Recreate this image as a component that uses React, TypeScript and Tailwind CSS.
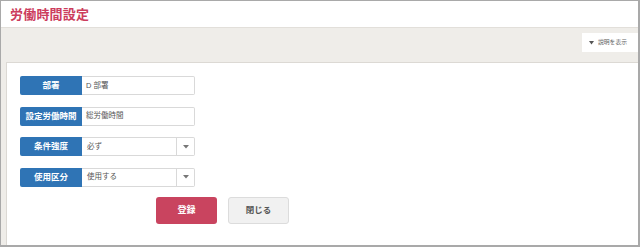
const jp = "font-['Liberation_Sans','Noto_Sans_CJK_JP',sans-serif]"

function Label({ text }: { text: string }) {
  return (
    <div className="w-[62px] h-full bg-[#2f74b5] rounded-l-[2px] flex items-center justify-center text-white text-[8.5px] font-bold shrink-0 whitespace-nowrap">
      {text}
    </div>
  )
}

function TextRow({ label, value }: { label: string; value: string }) {
  return (
    <div className="flex h-[19px]">
      <Label text={label} />
      <div className="w-[113px] h-full border border-l-0 border-[#d9d9d9] rounded-r-[2px] bg-white flex items-center pl-[4px] text-[7.5px] text-[#555]">
        {value}
      </div>
    </div>
  )
}

function SelectRow({ label, value }: { label: string; value: string }) {
  return (
    <div className="flex h-[19px]">
      <Label text={label} />
      <div className="w-[113px] h-full border border-l-0 border-[#d9d9d9] rounded-r-[2px] bg-white flex items-center text-[7.5px] text-[#555]">
        <span className="flex-1 pl-[5px]">{value}</span>
        <span className="w-[18px] h-full border-l border-[#d9d9d9] flex items-center justify-center">
          <svg width="6" height="4" viewBox="0 0 6 4">
            <path d="M0 0 L6 0 L3 3.5 Z" fill="#777" />
          </svg>
        </span>
      </div>
    </div>
  )
}

export default function App() {
  return (
    <div className={`w-[640px] h-[247px] border-l border-t border-r-2 border-b-2 border-[#a9a9a9] flex flex-col bg-[#efede9] ${jp}`}>
      {/* Header */}
      <div className="h-[27px] bg-white border-b border-[#e2dfda] flex items-center pl-[9px] shrink-0">
        <h1 className="text-[13px] font-bold text-[#cc3d5d] leading-none tracking-[0.2px]">労働時間設定</h1>
      </div>

      {/* Toolbar */}
      <div className="h-[34px] flex justify-end items-start pt-[5px] shrink-0">
        <div className="w-[56px] h-[19px] bg-white flex items-center pl-[7px] gap-[4px] text-[5.8px] text-[#666]">
          <svg width="5" height="4" viewBox="0 0 5 4">
            <path d="M0 0 L5 0 L2.5 3.5 Z" fill="#555" />
          </svg>
          <span>説明を表示</span>
        </div>
      </div>

      {/* Panel */}
      <div className="flex-1 pl-[5px] flex">
        <div className="flex-1 bg-white border-l border-t border-[#dcd9d4] pl-[13px] pt-[13px]">
          <div className="flex flex-col gap-[11.5px]">
            <TextRow label="部署" value="D 部署" />
            <TextRow label="設定労働時間" value="総労働時間" />
            <SelectRow label="条件強度" value="必ず" />
            <SelectRow label="使用区分" value="使用する" />
          </div>
          <div className="flex gap-[11px] mt-[10.5px] pl-[136px]">
            <button className="w-[61px] h-[27px] rounded-[3px] bg-[#c9445f] text-white text-[9px] font-bold">登録</button>
            <button className="w-[61px] h-[27px] rounded-[3px] bg-[#f1f1f1] border border-[#dcdcdc] text-[#555] text-[8.5px] font-bold">閉じる</button>
          </div>
        </div>
      </div>
    </div>
  )
}
